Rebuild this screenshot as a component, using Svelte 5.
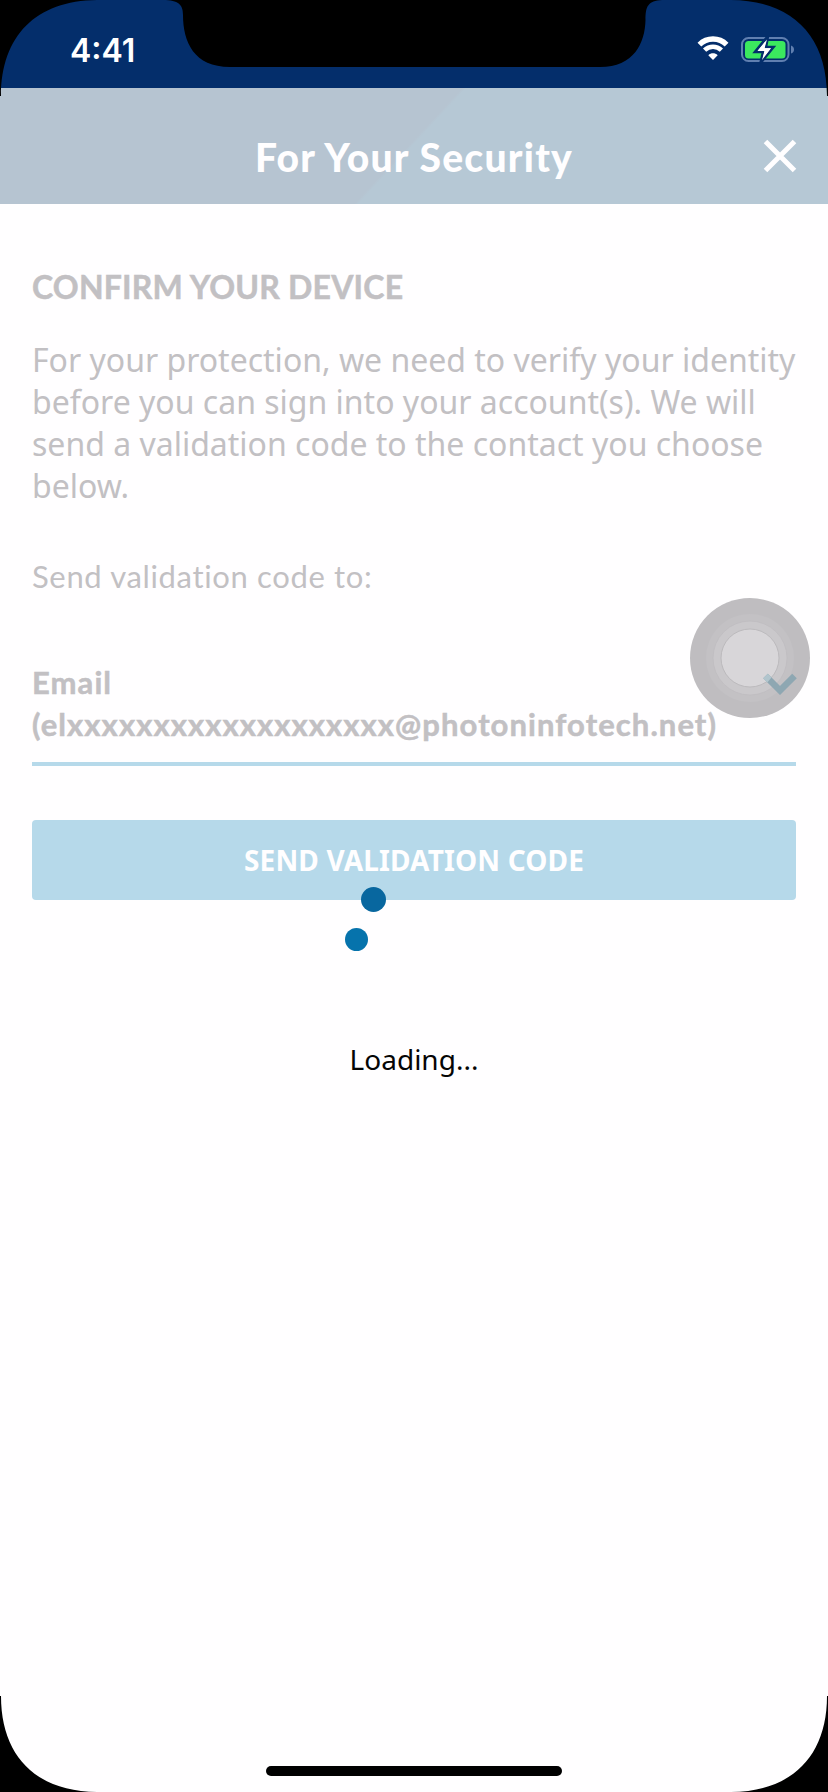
<script>
  const title = 'For Your Security';
</script>

<div class="phone">
  <div class="status">
    <span class="time">4:41</span>
    <div class="indicators">
      <svg width="32" height="25" viewBox="0 0 32 25">
        <path d="M2.4 9.6C10 2.2 22 2.2 29.6 9.6" fill="none" stroke="#fff" stroke-width="5.4" />
        <path d="M7.6 15.2C12.4 10.5 19.6 10.5 24.4 15.2" fill="none" stroke="#fff" stroke-width="4.6" />
        <path d="M11.3 20.2C14 17.6 18 17.6 20.7 20.2L16 25Z" fill="#fff" />
      </svg>
      <svg width="54" height="29" viewBox="0 0 54 29">
        <rect x="1" y="3" width="46.5" height="23" rx="6.5" fill="none" stroke="#607fb0" stroke-width="2" />
        <path d="M50 10.5Q53 11.5 53 14.5T50 18.5Z" fill="#607fb0" />
        <rect x="4" y="6" width="40.5" height="17.5" rx="3.5" fill="#3be85e" />
        <path d="M27 1L14 17H22L19.5 28L32.5 12H25Z" fill="#fff" stroke="#042e6b" stroke-width="2.6" />
        <path d="M26 4.5L16.5 16H23.5L21 25L30 13.3H23.5Z" fill="#fff" />
      </svg>
    </div>
  </div>
  <header>
    <h1>{title}</h1>
    <svg class="close" width="34" height="34" viewBox="0 0 34 34">
      <path d="M2.5 2.5L31.5 31.5M31.5 2.5L2.5 31.5" stroke="#fffeff" stroke-width="5" />
    </svg>
  </header>
  <main>
    <h2>CONFIRM YOUR DEVICE</h2>
    <p class="intro">For your protection, we need to verify your identity<br />before you can sign into your account(s). We will<br />send a validation code to the contact you choose<br />below.</p>
    <p class="label">Send validation code to:</p>
    <div class="contact">
      <p class="kind">Email</p>
      <p class="address">(elxxxxxxxxxxxxxxxxxxx@photoninfotech.net)</p>
      <svg class="check" width="34" height="24" viewBox="0 0 34 24">
        <path d="M3 3L17 17L31 3" fill="none" stroke="#b6d9ea" stroke-width="6" />
      </svg>
    </div>
    <button>SEND VALIDATION CODE</button>
  </main>

  <svg class="overlay" width="828" height="1792" viewBox="0 0 828 1792">
    <circle cx="750" cy="658" r="60" fill="#bfbdc0" />
    <circle cx="750" cy="658" r="44" fill="#c3c1c4" />
    <circle cx="750" cy="658" r="37" fill="#cac8cb" stroke="#bfbdc0" stroke-width=".8" />
    <circle cx="750" cy="658" r="29" fill="#d8d6d9" stroke="#bcbabd" stroke-width="1" />
    <path d="M765.5 676L780 690.5L794.5 676" fill="none" stroke="#8ea7b2" stroke-width="6.5" />
    <path d="M763.2 678.3L767.8 673.7L771.5 677.4L767.3 682.4Z" fill="#b1c5cd" />
    <circle cx="373.5" cy="899.5" r="12.5" fill="#08679f" />
    <circle cx="356.5" cy="939.5" r="11.5" fill="#0673ac" />
    <rect x="266" y="1766" width="296" height="10" rx="5" fill="#000" />
    <path d="M0 0H97C36 .5 1 36 1 96H0Z" />
    <path d="M828 0H731C792 .5 827 36 827 96H828Z" />
    <path d="M166 0C180 1 183 6 183 15C183 42 194 67 230 67H600C634 67 645 43 645.5 20C645.5 6 648 1 662 0Z" />
    <path d="M0 1792H97C36 1791.5 1 1756 1 1696H0Z" />
    <path d="M828 1792H731C792 1791.5 827 1756 827 1696H828Z" />
  </svg>
  <div class="loading">Loading...</div>
</div>

<style>
  :global(body) { margin: 0; background: #fffeff; }
  .phone { position: relative; width: 828px; height: 1792px; overflow: hidden; background: #fffeff; font-family: 'Noto Sans', sans-serif; color: #c2c0c3; }
  .status { height: 88px; box-sizing: border-box; padding: 29px 33px 0 70px; display: flex; justify-content: space-between; background: #042e6b; }
  .time { font: 600 32px/43px Inter, sans-serif; color: #fff; }
  .indicators { display: flex; gap: 12px; padding-top: 6px; }
  header { height: 116px; display: grid; grid-template-columns: 80px 1fr 80px; background: linear-gradient(133deg, #b6c4d1 0 49.4%, #b6c8d5 49.8%); }
  h1 { grid-column: 2; margin: 0; padding-top: 43px; text-align: center; white-space: nowrap; font: 900 39px/52px Lato, sans-serif; letter-spacing: 1.25px; font-variant-ligatures: none; color: #fffeff; }
  .close { margin: 51px 0 0 15px; }
  main { padding: 62px 32px 0; }
  h2, p { margin: 0; line-height: 42px; white-space: nowrap; }
  h2 { font: 700 32px/42px Lato, sans-serif; letter-spacing: .2px; -webkit-text-stroke: .5px #c2c0c3; }
  .intro { margin-top: 31px; font-size: 32px; }
  .label { margin-top: 48px; font: 400 31px/42px Lato, sans-serif; letter-spacing: .65px; font-variant-ligatures: none; }
  .contact { position: relative; margin-top: 64px; padding-bottom: 17px; border-bottom: 4px solid #b6d9ea; font: 700 31px/42px Lato, sans-serif; letter-spacing: 1.08px; font-variant-ligatures: none; -webkit-text-stroke: .5px #c2c0c3; }
  .check { position: absolute; right: -1px; top: 12px; }
  button { display: block; width: 100%; height: 80px; margin-top: 54px; padding: 0; border: 0; border-radius: 4px; background: #b6d9ea; color: #fffeff; font: 700 28px/40px 'Noto Sans', sans-serif; letter-spacing: .15px; }
  .overlay { position: absolute; inset: 0; }
  .loading { position: absolute; left: 0; right: 0; top: 1039px; text-align: center; font-size: 28px; line-height: 40px; color: #050505; }
</style>
